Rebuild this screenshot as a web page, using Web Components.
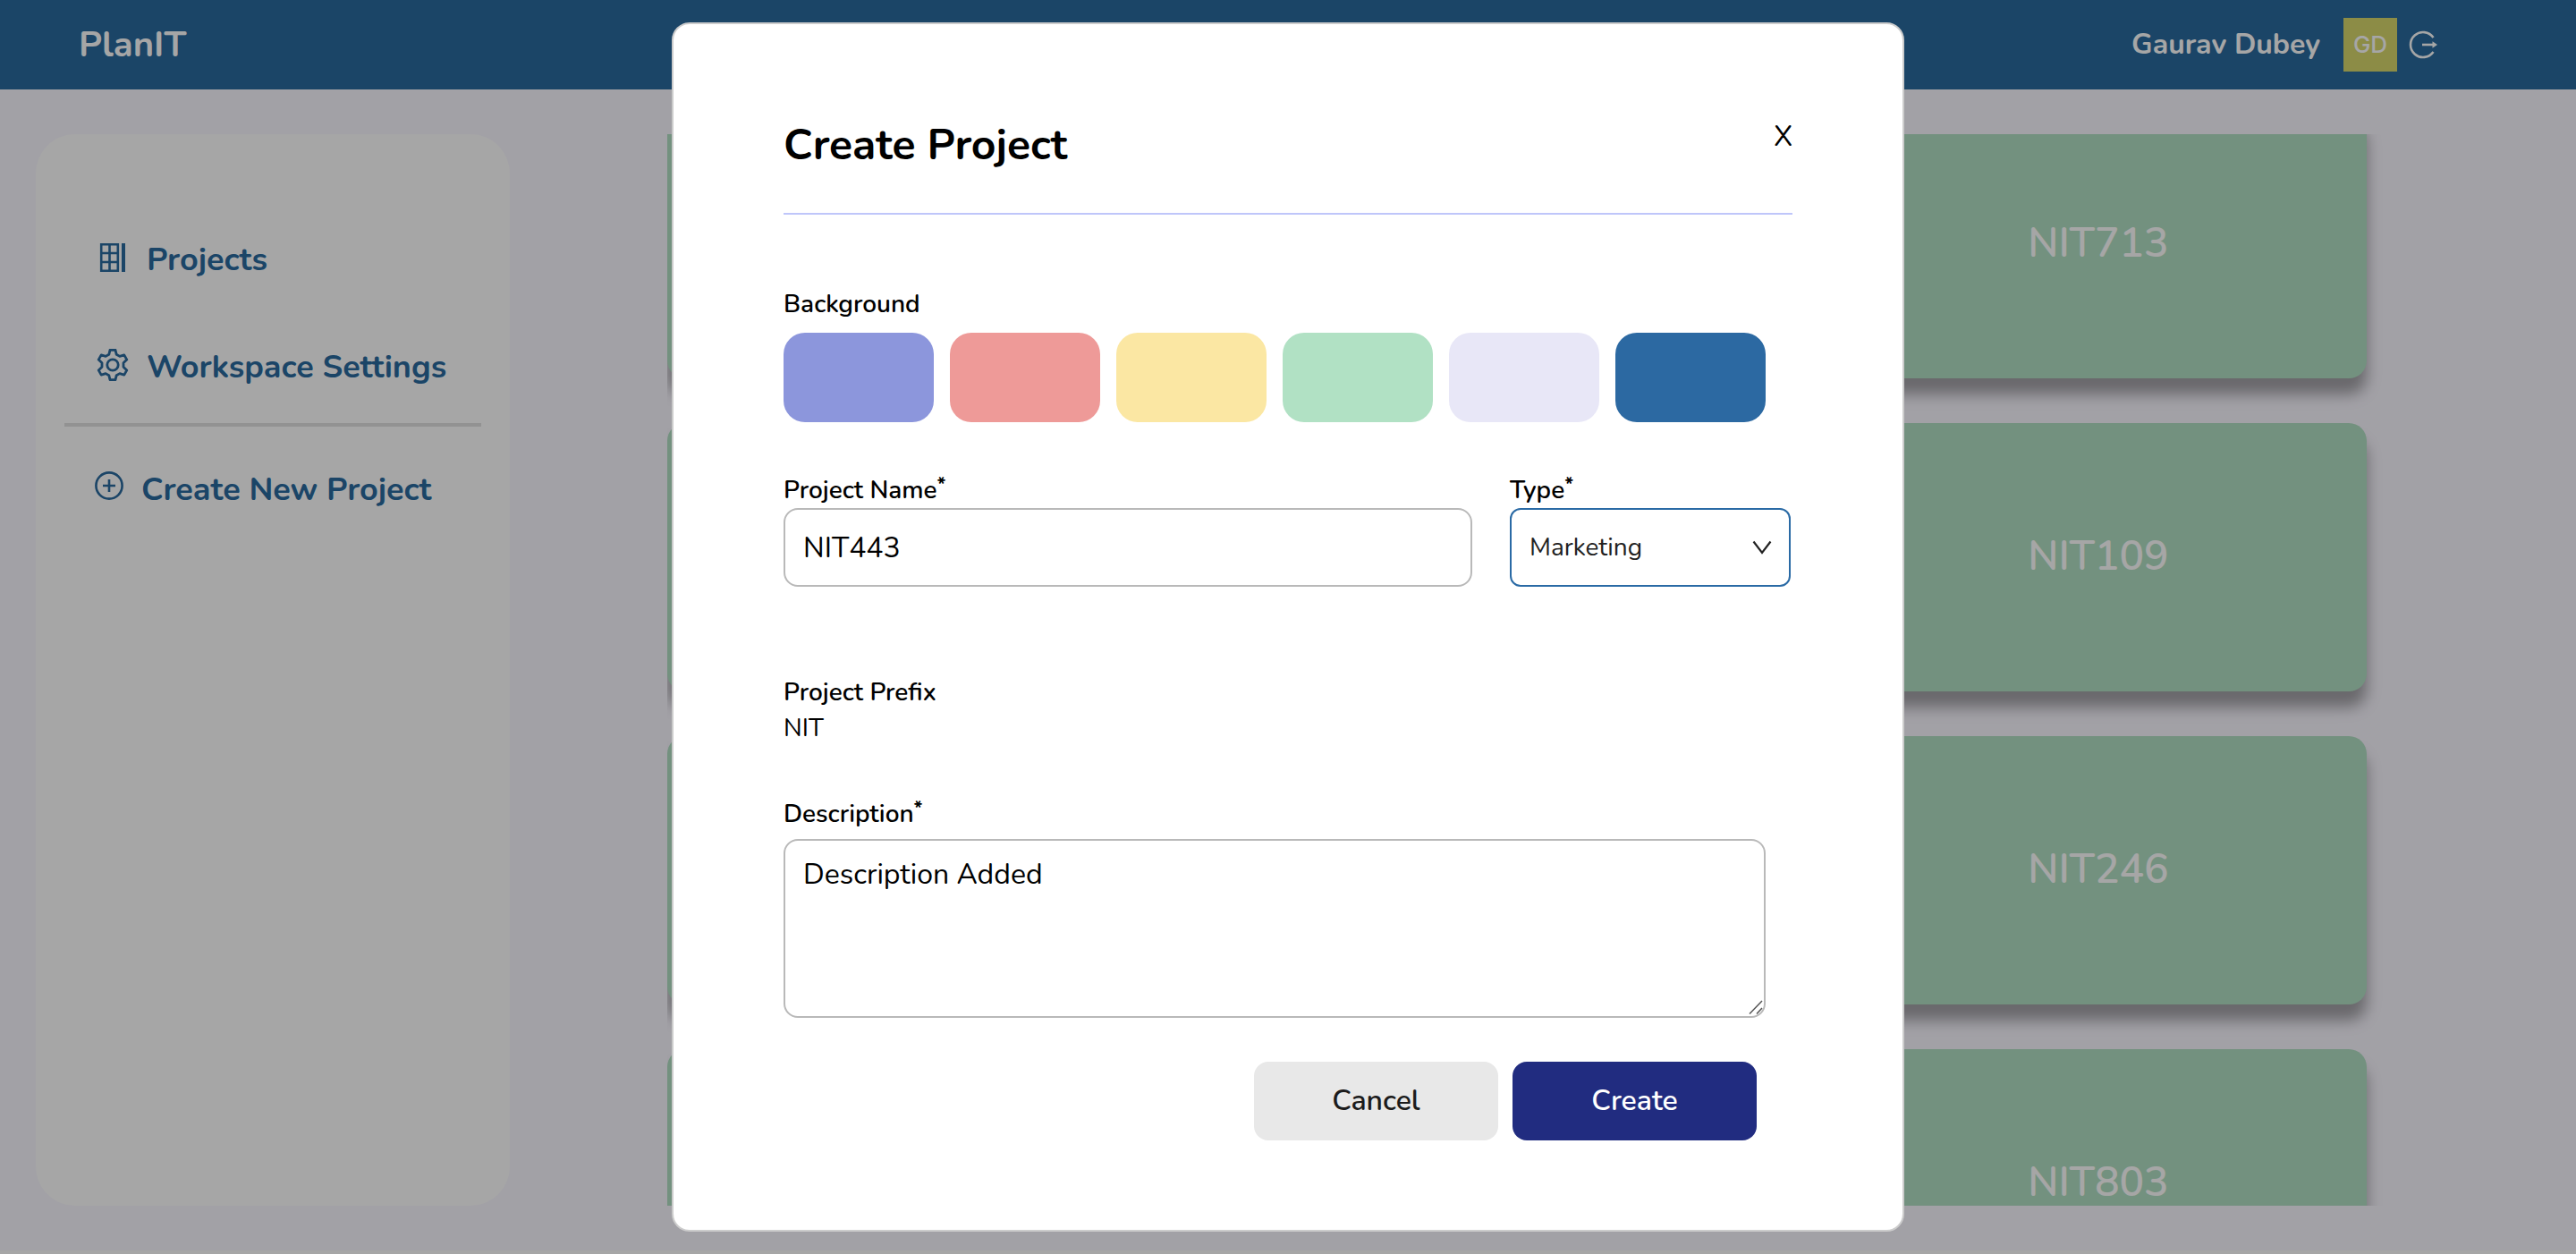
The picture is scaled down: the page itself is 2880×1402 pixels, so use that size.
<!DOCTYPE html>
<html lang="en">
<head>
<meta charset="utf-8">
<meta name="viewport" content="width=device-width, initial-scale=1">
<title>PlanIT</title>
<style>
  html { background: #fff; }
  body {
    margin: 0;
    font-family: Nunito, Lato, "Open Sans", sans-serif;
    color: #000;
    overflow: hidden;
  }
</style>
</head>
<body>
<app-shell>
  <app-header slot="header" brand="PlanIT" user="Gaurav Dubey" initials="GD"></app-header>
  <app-sidebar slot="sidebar"></app-sidebar>
  <project-board slot="main">
    <project-card></project-card><project-card></project-card><project-card>NIT713</project-card>
    <project-card></project-card><project-card></project-card><project-card>NIT109</project-card>
    <project-card></project-card><project-card></project-card><project-card>NIT246</project-card>
    <project-card></project-card><project-card></project-card><project-card>NIT803</project-card>
  </project-board>
</app-shell>
<modal-dialog heading="Create Project">
  <project-form></project-form>
</modal-dialog>

<script>
const base = `<style>
  *, *::before, *::after { box-sizing: border-box; }
  button, input, select, textarea { font: inherit; color: inherit; margin: 0; }
  svg { display: block; flex: none; }
</style>`;

class Base extends HTMLElement {
  connectedCallback() {
    if (this.shadowRoot) return;
    this.attachShadow({ mode: 'open' }).innerHTML = base + this.view();
    this.ready();
  }
  ready() {}
  attr(name) { return this.getAttribute(name) || ''; }
}

customElements.define('app-shell', class extends Base {
  view() {
    return `<style>
      :host { display: flex; flex-direction: column; height: calc(100vh - 4px); background: #f9f7ff; }
      .body { flex: 1; min-height: 0; display: flex; gap: 176px; padding: 50px 40px; }
      ::slotted([slot=main]) { flex: 1; min-width: 0; }
    </style>
    <slot name="header"></slot>
    <div class="body"><slot name="sidebar"></slot><slot name="main"></slot></div>`;
  }
});

customElements.define('app-header', class extends Base {
  view() {
    return `<style>
      :host { display: block; background: #2a6a9f; color: #fff; }
      header { height: 100px; padding: 0 154px 0 88px; display: flex; align-items: center; justify-content: space-between; }
      .brand { font-size: 40px; line-height: 48px; font-weight: 700; color: inherit; text-decoration: none; }
      .user { display: flex; align-items: center; }
      .name { font-size: 32px; line-height: 40px; font-weight: 700; margin-right: 26px; }
      .avatar { width: 60px; height: 60px; display: grid; place-items: center; background: #d7d76c;
        font: 500 26px/32px Inter, "Liberation Sans", sans-serif; margin-right: 12px; }
      button { background: none; border: 0; padding: 0; }
    </style>
    <header>
      <a class="brand" href="#">${this.attr('brand')}</a>
      <div class="user">
        <span class="name">${this.attr('user')}</span>
        <span class="avatar">${this.attr('initials')}</span>
        <button type="button" aria-label="Log out">
          <svg width="34" height="34" viewBox="0 0 34 34" fill="none" stroke="currentColor" stroke-width="2.6">
            <path d="M28.5 9A14 14 0 1 0 28.5 25"/>
            <path d="M16 17h12"/>
            <path d="M27.500 13.200v7.600l5.500-3.800z" fill="currentColor" stroke="none"/>
          </svg>
        </button>
      </div>
    </header>`;
  }
});

customElements.define('app-sidebar', class extends Base {
  view() {
    return `<style>
      :host { display: block; box-sizing: border-box; width: 530px; flex: none; background: #fff; border-radius: 44px;
        color: #2a6a9f; padding-top: 115px; }
      nav { display: flex; flex-direction: column; gap: 68px; padding: 0 68px; }
      a, button { display: flex; align-items: flex-start; gap: 20px; font-size: 36px; line-height: 52px; font-weight: 700;
        color: inherit; text-decoration: none; white-space: nowrap; }
      a svg { margin-top: 5px; }
      button { background: none; border: 0; padding: 0; margin: 45px 66px 0; }
      button svg { margin-top: 5px; }
      hr { border: 0; height: 4px; background: #e1e1e1; margin: 36px 32px 0; }
    </style>
    <nav>
      <a href="#">
        <svg width="36" height="36" viewBox="0 0 36 36" fill="none" stroke="currentColor" stroke-width="2.6">
          <path d="M5.2 3.2h18.600v29.600H5.200zM14.500 3v30M5 13h19M5 23h19"/><path d="M30 2v32" stroke-width="4"/>
        </svg>Projects</a>
      <a href="#">
        <svg width="36" height="36" viewBox="0 0 36 36" fill="none" stroke="currentColor" stroke-width="2.8" stroke-linejoin="round">
          <path d="M15 1.3h6l1.2 5 3.6 2.1 5-1.5 3 5.2L30 15.700v4.600l3.800 3.600-3 5.200-5-1.500-3.600 2.100-1.200 5h-6l-1.200-5-3.600-2.100-5 1.500-3-5.200L6 20.300v-4.600L2.200 12.100l3-5.200 5 1.500 3.600-2.100z"/>
          <circle cx="18" cy="18" r="6.2"/>
        </svg>Workspace Settings</a>
    </nav>
    <hr>
    <button type="button">
      <svg width="32" height="32" viewBox="0 0 32 32" fill="none" stroke="currentColor" stroke-width="2.6">
        <circle cx="16" cy="16" r="14.6"/><path d="M16 9v14M9 16h14"/>
      </svg>Create New Project</button>`;
  }
});

customElements.define('project-board', class extends Base {
  view() {
    return `<style>
      :host { display: block; overflow: hidden; }
      .grid { display: grid; grid-template-columns: repeat(3, 600px); gap: 50px; padding-bottom: 50px; }
    </style><div class="grid"><slot></slot></div>`;
  }
  ready() { requestAnimationFrame(() => { this.scrollTop = 27; }); this.scrollTop = 27; }
});

customElements.define('project-card', class extends Base {
  view() {
    return `<style>
      :host { display: grid; place-items: center; box-sizing: border-box; height: 300px; padding-bottom: 2px;
        border-radius: 20px; background: #b1dfc3; color: #fff; font-size: 46px; line-height: 48px; font-weight: 600;
        box-shadow: 0 18px 16px rgba(0, 0, 0, .35); }
    </style><span><slot></slot></span>`;
  }
});

customElements.define('modal-dialog', class extends Base {
  view() {
    return `<style>
      :host { position: fixed; inset: 0; display: flex; align-items: center; justify-content: center;
        background: rgba(0, 0, 0, .35); }
      section { width: min(1378px, 94vw); padding: 100px 123px; background: #fff; border: 2px solid #ccc; border-radius: 20px; }
      header { display: flex; align-items: flex-start; justify-content: space-between; padding-bottom: 41px;
        border-bottom: 2px solid #bfc6fa; }
      h1 { margin: 0; font-size: 48px; line-height: 70px; font-weight: 700; }
      button { background: none; border: 0; padding: 0; font-size: 32px; line-height: 52px; }
    </style>
    <section role="dialog" aria-modal="true" aria-labelledby="t">
      <header><h1 id="t">${this.attr('heading')}</h1><button type="button">X</button></header>
      <slot></slot>
    </section>`;
  }
});

const labelCss = `
  .label { display: block; font-size: 28px; line-height: 36px; font-weight: 600; padding: 0; }
  sup { font-size: 22px; line-height: 0; font-weight: 700; vertical-align: 8px; }`;
const boxCss = `
  .box { display: block; width: 100%; background: #fff; border: 2px solid #b9b9b9; border-radius: 16px; padding: 0 20px;
    font-size: 32px; outline: 0; }`;

customElements.define('color-picker', class extends Base {
  view() {
    const colors = this.attr('colors').split(' ');
    return `<style>${labelCss}
      :host { display: block; }
      fieldset { border: 0; margin: 0; padding: 0; min-width: 0; }
      .row { display: grid; grid-template-columns: repeat(6, 1fr); gap: 18px; margin-top: 14px; }
      input { appearance: none; height: 100px; border-radius: 24px; background: var(--c); }
    </style>
    <fieldset><legend class="label">Background</legend>
      <div class="row">${colors.map(c =>
        `<input type="radio" name="bg" value="${c}" aria-label="${c}" style="--c:${c}">`).join('')}</div>
    </fieldset>`;
  }
});

customElements.define('text-field', class extends Base {
  view() {
    return `<style>${labelCss}${boxCss}
      :host { display: block; }
      .box { height: 88px; margin-top: 2px; }
    </style>
    <label class="label" for="f">${this.attr('label')}<sup>*</sup></label>
    <input class="box" id="f" type="text" value="${this.attr('value')}">`;
  }
});

customElements.define('select-field', class extends Base {
  view() {
    return `<style>${labelCss}${boxCss}
      :host { display: block; }
      .wrap { display: grid; align-items: center; margin-top: 2px; }
      .wrap > * { grid-area: 1 / 1; }
      .box { height: 88px; appearance: none; font-size: 28px; color: #222; border-color: #2a6aa5; border-radius: 12px; }
      svg { justify-self: end; margin-right: 21px; pointer-events: none; }
    </style>
    <label class="label" for="f">${this.attr('label')}<sup>*</sup></label>
    <div class="wrap">
      <select class="box" id="f"><option>${this.attr('value')}</option></select>
      <svg width="22" height="16" viewBox="0 0 22 16" fill="none" stroke="#222" stroke-width="2.2"><path d="M1.5 1.5L11 14l9.5-12.5"/></svg>
    </div>`;
  }
});

customElements.define('area-field', class extends Base {
  view() {
    return `<style>${labelCss}${boxCss}
      :host { display: block; }
      .wrap { display: grid; margin-top: 10px; }
      .wrap > * { grid-area: 1 / 1; }
      .box { height: 200px; resize: none; padding: 16px 20px; line-height: 44px; }
      svg { place-self: end; margin: 3px; pointer-events: none; }
    </style>
    <label class="label" for="f">${this.attr('label')}<sup>*</sup></label>
    <div class="wrap">
      <textarea class="box" id="f">${this.attr('value')}</textarea>
      <svg width="16" height="17" viewBox="0 0 16 17" fill="none" stroke="#555" stroke-width="1.5"><path d="M1 15.5L15 1M9 15.5l6-6.5"/></svg>
    </div>`;
  }
});

customElements.define('app-button', class extends Base {
  view() {
    return `<style>
      :host { display: block; width: 273px; }
      button { width: 100%; height: 88px; border: 0; border-radius: 16px; background: #e8e8e8; color: #1c1c1c;
        font-size: 32px; line-height: 40px; font-weight: 600; }
      :host([primary]) button { background: #212c80; color: #fff; }
    </style><button type="button"><slot></slot></button>`;
  }
});

customElements.define('project-form', class extends Base {
  view() {
    return `<style>${labelCss}
      :host { display: block; }
      color-picker { margin: 82px 30px 0 0; }
      .row { display: grid; grid-template-columns: 1fr 314px; gap: 42px; margin: 58px 2px 0 0; }
      .prefix { margin-top: 100px; display: flex; flex-direction: column; gap: 4px; }
      .value { font-size: 28px; line-height: 36px; }
      area-field { margin: 60px 30px 0 0; }
      .actions { display: flex; justify-content: flex-end; gap: 16px; margin: 49px 40px 0 0; }
    </style>
    <color-picker colors="#8c96dc #ee9a98 #fbe7a3 #b1e1c4 #e8e7f7 #2c69a2"></color-picker>
    <div class="row">
      <text-field label="Project Name" value="NIT443"></text-field>
      <select-field label="Type" value="Marketing"></select-field>
    </div>
    <div class="prefix"><span class="label">Project Prefix</span><span class="value">NIT</span></div>
    <area-field label="Description" value="Description Added"></area-field>
    <div class="actions"><app-button>Cancel</app-button><app-button primary>Create</app-button></div>`;
  }
});
</script>
</body>
</html>
